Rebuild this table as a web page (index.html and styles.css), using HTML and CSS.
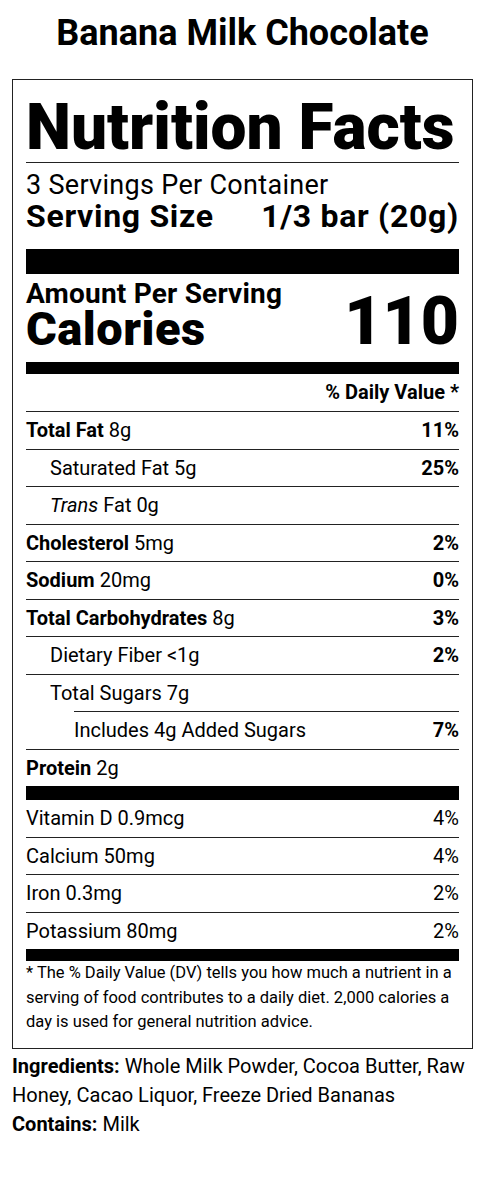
FILE: index.html
```html
<!DOCTYPE html>
<html lang="en">
<head>
    <meta charset="UTF-8">
    <meta name="viewport" content="width=device-width, initial-scale=1.0">
    <title>Banana Milk Chocolate - Nutrition Facts</title>
    <link rel="stylesheet" href="styles.css">
</head>
<body>
    <h1 class="product-title">Banana Milk Chocolate</h1>

    <section class="label">
        <h2 class="label-title">Nutrition Facts</h2>

        <div class="servings">
            <p class="servings-count">3 Servings Per Container</p>
            <p class="serving-size">
                <span>Serving Size</span>
                <span>1/3 bar (20g)</span>
            </p>
        </div>

        <div class="calories">
            <div class="calories-left">
                <p class="amount">Amount Per Serving</p>
                <p class="calories-label">Calories</p>
            </div>
            <p class="calories-value">110</p>
        </div>

        <p class="dv-head">% Daily Value *</p>

        <ul class="nutrients">
            <li class="row"><span><b>Total Fat</b> 8g</span><b>11%</b></li>
            <li class="row indent"><span>Saturated Fat 5g</span><b>25%</b></li>
            <li class="row indent"><span><i>Trans</i> Fat 0g</span></li>
            <li class="row"><span><b>Cholesterol</b> 5mg</span><b>2%</b></li>
            <li class="row"><span><b>Sodium</b> 20mg</span><b>0%</b></li>
            <li class="row"><span><b>Total Carbohydrates</b> 8g</span><b>3%</b></li>
            <li class="row indent"><span>Dietary Fiber &lt;1g</span><b>2%</b></li>
            <li class="row indent"><span>Total Sugars 7g</span></li>
            <li class="row sub-indent"><span>Includes 4g Added Sugars</span><b>7%</b></li>
            <li class="row"><span><b>Protein</b> 2g</span></li>
        </ul>

        <ul class="vitamins">
            <li class="row"><span>Vitamin D 0.9mcg</span><span>4%</span></li>
            <li class="row"><span>Calcium 50mg</span><span>4%</span></li>
            <li class="row"><span>Iron 0.3mg</span><span>2%</span></li>
            <li class="row"><span>Potassium 80mg</span><span>2%</span></li>
        </ul>

        <p class="footnote">* The % Daily Value (DV) tells you how much a nutrient in a serving of food contributes to a daily diet. 2,000 calories a day is used for general nutrition advice.</p>
    </section>

    <div class="ingredients">
        <p><b>Ingredients:</b> Whole Milk Powder, Cocoa Butter, Raw Honey, Cacao Liquor, Freeze Dried Bananas</p>
        <p><b>Contains:</b> Milk</p>
    </div>
</body>
</html>
```

FILE: styles.css
```css
body {
    font-family: Roboto, "Liberation Sans", Arial, sans-serif;
    margin: 0;
    padding: 11px 12px;
    background-color: #fff;
    color: #000;
}

p {
    margin: 0;
}

.product-title {
    margin: 0 0 24px;
    font-size: 36px;
    line-height: 44px;
    font-weight: 700;
    text-align: center;
}

.label {
    border: 1px solid #222;
    padding: 0 13px 13px;
}

.label-title {
    margin: 0;
    padding: 16px 0 2px;
    font-size: 64px;
    line-height: 1;
    font-weight: 900;
    border-bottom: 1px solid #222;
}

.servings {
    padding: 8px 0 16px;
    border-bottom: 25px solid #000;
}

.servings-count {
    font-size: 27px;
    line-height: 28px;
    letter-spacing: 0.3px;
}

.serving-size {
    display: flex;
    justify-content: space-between;
    font-size: 32px;
    line-height: 34px;
    font-weight: 700;
    letter-spacing: 0.7px;
}

.calories {
    display: flex;
    justify-content: space-between;
    align-items: flex-end;
    padding: 7px 0 11px;
    border-bottom: 12px solid #000;
}

.amount {
    font-size: 28px;
    line-height: 26px;
    font-weight: 700;
    letter-spacing: 0.2px;
}

.calories-label {
    font-size: 47px;
    line-height: 44px;
    font-weight: 900;
    letter-spacing: 0.5px;
}

.calories-value {
    font-size: 66px;
    line-height: 58px;
    font-weight: 900;
}

.dv-head {
    padding: 6px 0 7px;
    font-size: 20px;
    line-height: 24px;
    font-weight: 700;
    text-align: right;
}

.nutrients,
.vitamins {
    list-style: none;
    margin: 0;
    padding: 0;
}

.nutrients {
    border-bottom: 14px solid #000;
}

.vitamins {
    border-bottom: 12px solid #000;
}

.row {
    display: flex;
    justify-content: space-between;
    padding: 5px 0;
    font-size: 20px;
    line-height: 26.5px;
    border-top: 1px solid #222;
}

.vitamins .row:first-child {
    border-top: none;
}

.row.indent {
    padding-left: 24px;
}

.row.sub-indent {
    margin-left: 48px;
}

.footnote {
    font-size: 16.5px;
    line-height: 24.5px;
}

.ingredients {
    padding-top: 3px;
    font-size: 20px;
    line-height: 29px;
}
```
